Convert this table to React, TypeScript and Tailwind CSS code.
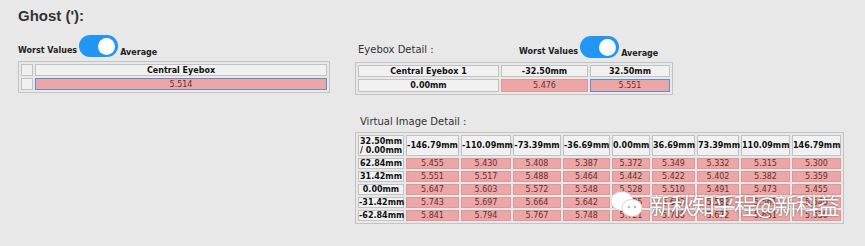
import React from "react";

const cols = ["-146.79mm", "-110.09mm", "-73.39mm", "-36.69mm", "0.00mm", "36.69mm", "73.39mm", "110.09mm", "146.79mm"];
const colW = ["w-[53px]", "w-[50px]", "w-[48px]", "w-[47px]", "w-[38px]", "w-[43px]", "w-[42px]", "w-[49px]", "w-[49px]"];
const rows: { label: string; values: string[] }[] = [
  { label: "62.84mm", values: ["5.455", "5.430", "5.408", "5.387", "5.372", "5.349", "5.332", "5.315", "5.300"] },
  { label: "31.42mm", values: ["5.551", "5.517", "5.488", "5.464", "5.442", "5.422", "5.402", "5.382", "5.359"] },
  { label: "0.00mm", values: ["5.647", "5.603", "5.572", "5.548", "5.528", "5.510", "5.491", "5.473", "5.455"] },
  { label: "-31.42mm", values: ["5.743", "5.697", "5.664", "5.642", "5.625", "5.603", "5.582", "5.561", "5.540"] },
  { label: "-62.84mm", values: ["5.841", "5.794", "5.767", "5.748", "5.721", "5.788", "5.672", "5.651", "5.630"] },
];

// label text left, switch, label text right
function Toggle() {
  return (
    <div className="flex items-end gap-[2px]">
      <span className="text-[8px] font-bold leading-[10px] mb-[1px]">Worst Values</span>
      <div className="w-[39px] h-[22px] rounded-full bg-[#2196f3] flex items-center justify-end pr-[3px]">
        <div className="w-[17px] h-[17px] rounded-full bg-white" />
      </div>
      <span className="text-[8px] font-bold leading-[10px] mb-[-1px]">Average</span>
    </div>
  );
}

const head = "bg-[#f1f1f1] border border-[#c2c2c2] font-bold text-center px-0 leading-[9px] text-[#111] whitespace-nowrap";
const val = "bg-[#eda6a6] border text-center text-[#6a3030] font-normal leading-[9px]";
const plain = val + " border-[#d99b9b]";
const picked = val + " border-[#5f8fd2]";

export default function App() {
  return (
    <div
      className="relative w-[865px] h-[246px] bg-[#e8e8e8] text-[#222] flex overflow-hidden"
      style={{ fontFamily: "'DejaVu Sans', Verdana, sans-serif" }}
    >
      {/* left side */}
      <div className="w-[355px] shrink-0 pl-[18px] pt-[7px]">
        <h2 className="text-[15px] font-bold leading-[17px] text-[#333]" style={{ fontFamily: "'Liberation Sans', Arial, sans-serif" }}>
          Ghost ('):
        </h2>
        <div className="mt-[11px]">
          <Toggle />
        </div>
        <table className="mt-[4px] w-[312px] table-fixed border border-[#c4c4c4] border-separate border-spacing-[2px] text-[8px]">
          <tbody>
            <tr>
              <td className={head + " w-[12px] h-[12px]"}></td>
              <td className={head + " h-[12px]"}>Central Eyebox</td>
            </tr>
            <tr>
              <td className={head + " h-[12px]"}></td>
              <td className={picked + " h-[12px]"}>5.514</td>
            </tr>
          </tbody>
        </table>
      </div>

      {/* right side */}
      <div className="pt-[36px]">
        <div className="flex items-end w-[320px]">
          <span className="text-[10px] text-[#333] ml-[3px] mb-[1px] w-[161px]">Eyebox Detail :</span>
          <Toggle />
        </div>
        <table className="mt-[4px] w-[318px] table-fixed border border-[#c4c4c4] border-separate border-spacing-[2px] text-[8px]">
          <tbody>
            <tr>
              <td className={head + " w-[141px] h-[12px]"}>Central Eyebox 1</td>
              <td className={head + " w-[87px] h-[12px]"}>-32.50mm</td>
              <td className={head + " h-[12px]"}>32.50mm</td>
            </tr>
            <tr>
              <td className={head + " h-[13px]"}>0.00mm</td>
              <td className={plain + " h-[13px]"}>5.476</td>
              <td className={picked + " h-[13px]"}>5.551</td>
            </tr>
          </tbody>
        </table>

        <div className="mt-[21px] ml-[5px] text-[10px] leading-[12px] text-[#333]">Virtual Image Detail :</div>
        <table className="mt-[4px] w-[489px] table-fixed border border-[#c4c4c4] border-separate border-spacing-[2px] text-[8px]">
          <tbody>
            <tr>
              <td className={head + " w-[46px] h-[21px]"}>
                32.50mm
                <br />/ 0.00mm
              </td>
              {cols.map((c, i) => (
                <td key={c} className={head + " h-[21px] " + colW[i]}>
                  {c}
                </td>
              ))}
            </tr>
            {rows.map((r) => (
              <tr key={r.label}>
                <td className={head + " h-[11px]"}>{r.label}</td>
                {r.values.map((v, i) => (
                  <td key={i} className={plain + " h-[11px]"}>
                    {v}
                  </td>
                ))}
              </tr>
            ))}
          </tbody>
        </table>
      </div>

      {/* watermark over the table */}
      <div className="absolute left-[610px] top-[189px] flex items-center gap-[6px]">
        <svg width="34" height="30" viewBox="0 0 34 30">
          <ellipse cx="12" cy="12" rx="11" ry="9.5" fill="white" stroke="#cfcfcf" strokeWidth="0.8" />
          <ellipse cx="22" cy="19" rx="10" ry="8.5" fill="white" stroke="#cfcfcf" strokeWidth="0.8" />
          <circle cx="19" cy="18" r="1.3" fill="#bbb" />
          <circle cx="25" cy="18" r="1.3" fill="#bbb" />
        </svg>
        <span
          className="text-[23px] leading-[28px] text-white tracking-[-2px]"
          style={{ fontFamily: "'Noto Sans CJK SC', sans-serif", textShadow: "0 0 2px rgba(0,0,0,0.6)" }}
        >
          新秋知乎程@新科益
        </span>
      </div>
    </div>
  );
}
